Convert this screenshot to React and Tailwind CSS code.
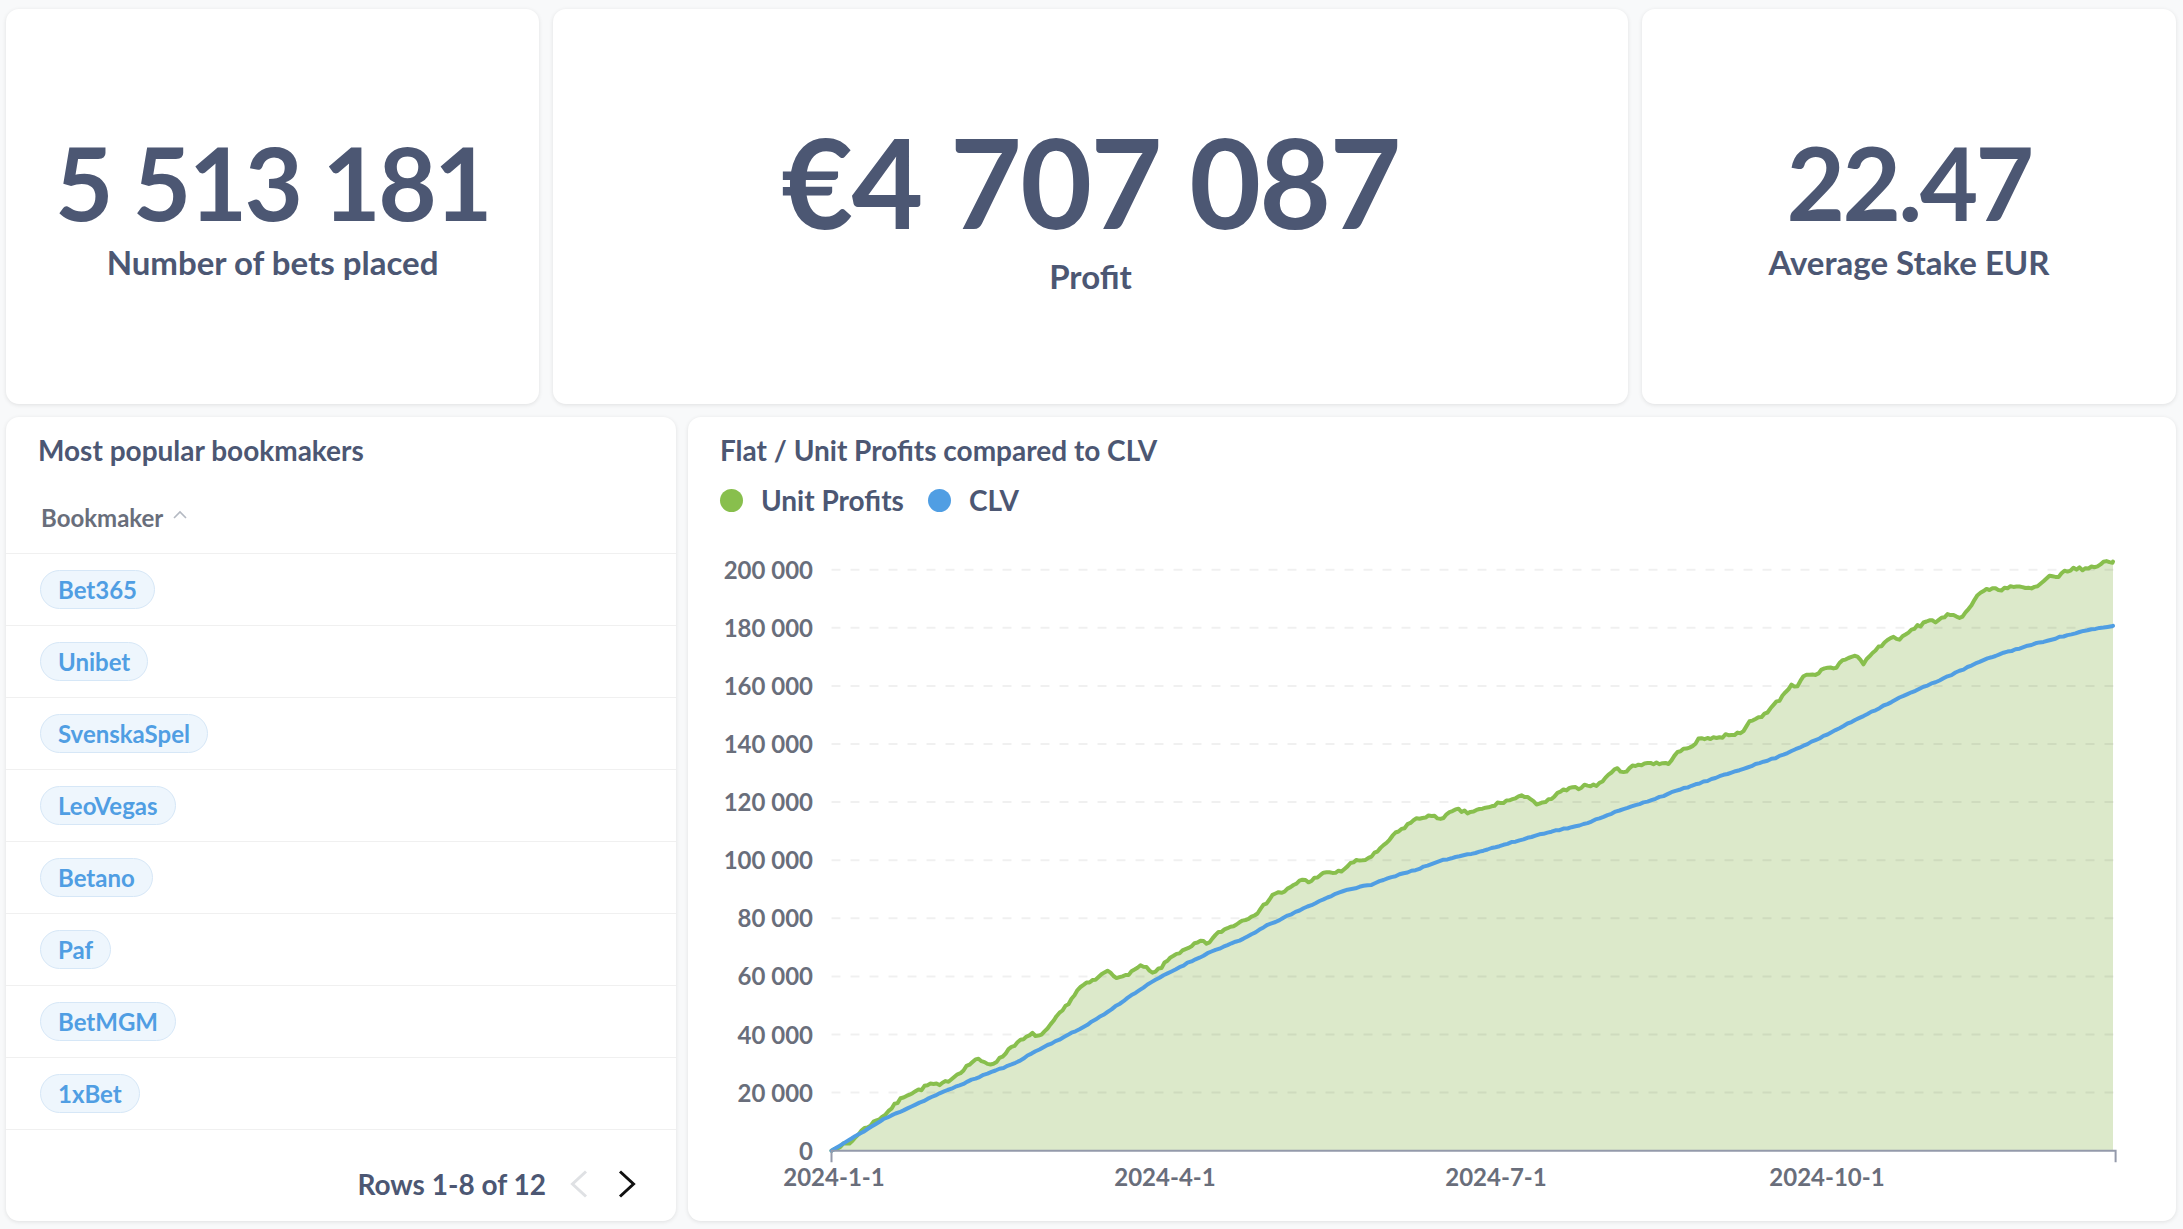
import React from 'react'

// Small deterministic PRNG so the chart wiggle is stable between renders.
function rng(seed) {
  let a = seed
  return () => {
    a |= 0; a = (a + 0x6d2b79f5) | 0
    let t = Math.imul(a ^ (a >>> 15), 1 | a)
    t = (t + Math.imul(t ^ (t >>> 7), 61 | t)) ^ t
    return ((t ^ (t >>> 14)) >>> 0) / 4294967296
  }
}

// [x in chart px, value in thousands]
const GREEN = [[111.5,0],[120,1.8],[130,2.5],[140,6.5],[154,9.8],[165,12.5],[184.5,19],[200,21],[210,23],[220,22.4],[235.5,25.8],[256,31.6],[262,30.5],[271,29.8],[280,31.6],[291.6,36],[313,40.2],[320,39.4],[327,41.3],[333,44.4],[343,48.4],[360,56.2],[376.7,59.1],[388,62.3],[393,60.8],[400,59.1],[413,62],[423,63.7],[433,60.8],[443,63.7],[453,67.4],[467,69.2],[480,72.1],[487,71.2],[500,75.4],[513,77.5],[530,80.6],[540,82.6],[553,88.4],[563,89],[573,91],[583,93.5],[590,92.4],[600,95.2],[620,96],[633,99.3],[647,100.4],[660,103.5],[673,108.4],[693,113.6],[707,115.3],[720,114.4],[737,117.4],[747,116.3],[770,118.2],[777,119.4],[793,121],[807,122.4],[818,118.8],[827,120.2],[843,124],[860,125.1],[868,126.2],[875,125.4],[887,128.5],[893,131.4],[907,130.6],[913,132.5],[927,133.5],[947,133.1],[960,137.7],[967,138.3],[980,141.7],[993,142.3],[1000,142],[1007,143.4],[1017,143.4],[1027,145.8],[1030,147.7],[1040,149.2],[1050,152],[1060,155.5],[1070,160],[1077,160],[1083,163.5],[1097,163.5],[1103,165.8],[1117,166.4],[1122,169],[1137,170.4],[1143,167.5],[1153,171.6],[1168,175.9],[1175,177],[1180,175.9],[1193,179.6],[1202,181.2],[1210,183],[1217,181.9],[1230,184.8],[1243,183.6],[1250,187.6],[1260,192.2],[1273,193.6],[1280,193.1],[1290,194.3],[1310,193.4],[1317,194],[1330,197.8],[1338,196.8],[1343,199.4],[1357,200.4],[1367,200.2],[1377,201.4],[1385,202.8],[1393,202.8]]
const BLUE = [[111.5,0],[164,10.9],[215,19],[266,26.4],[293,29.8],[317,34.5],[360,41.9],[387,47.6],[413,53.9],[437,59.1],[467,64.5],[493,68.8],[521,72.5],[547,77.5],[572,81.5],[593,84.9],[623,89.5],[650,91.5],[680,95.2],[693,96.4],[727,100.4],[760,103],[793,106.2],[827,109.6],[860,111.9],[893,116.3],[927,120.2],[960,124.3],[993,128],[1027,132],[1057,135.4],[1100,142],[1137,148.6],[1180,156],[1213,161],[1237,164.7],[1257,167.9],[1280,171],[1303,173.3],[1330,175.9],[1363,178.8],[1393,180.7]]

const X0 = 111.5
const X1 = 1395.6
const Y0 = 611.7
const yOf = (k) => Y0 - k * 2.905

function sample(anchors, step, amp, seed) {
  const r = rng(seed)
  const pts = []
  let j = 0
  for (let x = anchors[0][0]; x <= anchors[anchors.length - 1][0]; x += step) {
    while (j < anchors.length - 2 && anchors[j + 1][0] < x) j++
    const [ax, av] = anchors[j]
    const [bx, bv] = anchors[j + 1]
    const t = Math.min(1, Math.max(0, (x - ax) / (bx - ax)))
    let v = av + (bv - av) * t
    if (x > X0 + 4) v += (r() - 0.5) * amp
    pts.push([x, Math.max(0, v)])
  }
  const last = anchors[anchors.length - 1]
  pts.push(last)
  return pts
}

const greenPts = sample(GREEN, 3, 1.1, 7)
const bluePts = sample(BLUE, 4, 0.35, 11)
const toLine = (pts) => pts.map(([x, v]) => `${x.toFixed(1)},${yOf(v).toFixed(1)}`).join(' ')
const areaPath = `M${X0},${Y0} L${toLine(greenPts).split(' ').join(' L')} L1393,${Y0} Z`

const Y_TICKS = [0, 20, 40, 60, 80, 100, 120, 140, 160, 180, 200]
const X_TICKS = [['2024-1-1', 114], ['2024-4-1', 445], ['2024-7-1', 776], ['2024-10-1', 1107]]

function ProfitChart() {
  return (
    <svg width="1422" height="660" className="block" style={{ fontFamily: 'Lato, "Liberation Sans", sans-serif' }}>
      <path d={areaPath} fill="#dce9ca" />
      {Y_TICKS.slice(1).map((k) => (
        <line key={k} x1={X0} x2={X1} y1={yOf(k)} y2={yOf(k)} stroke="#000" strokeOpacity="0.06" strokeWidth="2" strokeDasharray="9 10" />
      ))}
      {Y_TICKS.map((k) => (
        <text key={k} x="93" y={yOf(k) + 9} textAnchor="end" fontSize="24" fontWeight="700" fill="#696e7b">
          {k === 0 ? '0' : `${k} 000`}
        </text>
      ))}
      <polyline points={toLine(greenPts)} fill="none" stroke="#88bf4d" strokeWidth="4" strokeLinejoin="round" strokeLinecap="round" />
      <polyline points={toLine(bluePts)} fill="none" stroke="#509ee3" strokeWidth="4" strokeLinejoin="round" strokeLinecap="round" />
      <path d={`M${X0},${Y0 + 11.5} V${Y0} H${X1} V${Y0 + 11.5}`} fill="none" stroke="#949aab" strokeWidth="2" />
      {X_TICKS.map(([l, x]) => (
        <text key={l} x={x} y="646.7" textAnchor="middle" fontSize="24" fontWeight="700" fill="#696e7b">{l}</text>
      ))}
    </svg>
  )
}

const CARD = 'bg-white rounded-[13px] shadow-[0_1px_4px_rgba(0,0,0,0.10)] overflow-hidden'

function Stat({ value, label, big }) {
  return (
    <div className={`${CARD} flex flex-col items-center justify-center`}>
      <div className={`${big ? 'text-[124px] tracking-[-1.7px]' : 'text-[101px] tracking-[-2.7px]'} leading-none font-bold whitespace-nowrap`}>{value}</div>
      <div className={`text-[33px] leading-[38px] font-bold ${big ? 'mt-[14px]' : 'mt-[10px]'}`}>{label}</div>
    </div>
  )
}

const BOOKMAKERS = ['Bet365', 'Unibet', 'SvenskaSpel', 'LeoVegas', 'Betano', 'Paf', 'BetMGM', '1xBet']

function Bookmakers() {
  return (
    <div className={`${CARD} flex flex-col`}>
      <h2 className="px-[32px] pt-[17px] text-[28px] leading-[32px] font-bold">Most popular bookmakers</h2>
      <div className="flex items-center gap-[10px] pl-[35px] pt-[37px] pb-[21px] border-b border-[#f0f0f0] text-[#696e7b]">
        <span className="text-[24px] leading-[29px] font-bold">Bookmaker</span>
        <svg width="14" height="9" viewBox="0 0 14 9" className="mt-[-6px]">
          <polyline points="1,8 7,2 13,8" fill="none" stroke="#b4b9c2" strokeWidth="1.6" />
        </svg>
      </div>
      {BOOKMAKERS.map((b) => (
        <div key={b} className="h-[72px] flex items-center pl-[34px] border-b border-[#f0f0f0]">
          <span className="px-[17px] py-[4px] rounded-full border border-[#d6e7f7] bg-[#eef6fd] text-[#509ee3] text-[24px] leading-[29px] font-bold">
            {b}
          </span>
        </div>
      ))}
      <div className="flex-1" />
      <div className="flex items-center justify-end pr-[40px] pb-[20px]">
        <span className="text-[28px] leading-[34px] font-bold">Rows 1-8 of 12</span>
        <svg width="18" height="28" viewBox="0 0 18 28" className="ml-[24px]">
          <polyline points="16,1.5 2.5,14 16,26.5" fill="none" stroke="#dfe1e4" strokeWidth="3" />
        </svg>
        <svg width="18" height="28" viewBox="0 0 18 28" className="ml-[30px]">
          <polyline points="2,1.5 15.5,14 2,26.5" fill="none" stroke="#111" strokeWidth="3" />
        </svg>
      </div>
    </div>
  )
}

function LegendItem({ color, label }) {
  return (
    <div className="flex items-center gap-[18px]">
      <span className={`w-[23px] h-[23px] rounded-full ${color}`} />
      <span className="text-[28px] leading-[32px] font-bold">{label}</span>
    </div>
  )
}

function ProfitCard() {
  return (
    <div className={`${CARD} flex flex-col px-[32px]`}>
      <h2 className="pt-[17px] text-[28px] leading-[32px] font-bold">Flat / Unit Profits compared to CLV</h2>
      <div className="mt-[18px] flex items-center gap-[24px]">
        <LegendItem color="bg-[#88bf4d]" label="Unit Profits" />
        <LegendItem color="bg-[#509ee3]" label="CLV" />
      </div>
      <div className="mt-[23px]">
        <ProfitChart />
      </div>
    </div>
  )
}

export default function App() {
  return (
    <div className="w-[2183px] h-[1229px] bg-[#f8f9fa] pt-[9px] pb-[8px] pl-[6px] pr-[7px] text-[#4c5773] font-['Lato','Liberation_Sans',sans-serif] grid grid-rows-[395px_804px] gap-y-[13px]">
      <div className="grid grid-cols-[533px_1fr_534px] gap-x-[14px]">
        <Stat value="5 513 181" label="Number of bets placed" />
        <Stat value="€4 707 087" label="Profit" big />
        <Stat value="22.47" label="Average Stake EUR" />
      </div>
      <div className="grid grid-cols-[670px_1fr] gap-x-[12px]">
        <Bookmakers />
        <ProfitCard />
      </div>
    </div>
  )
}
